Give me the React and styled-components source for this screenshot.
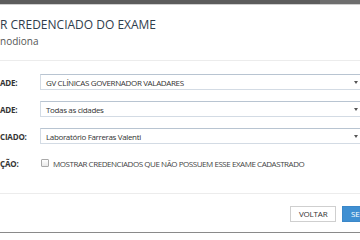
import React from 'react'
import styled, { createGlobalStyle } from 'styled-components'

const GlobalStyle = createGlobalStyle`
  html, body {
    margin: 0;
    padding: 0;
    background: #555;
    overflow: hidden;
  }
  * { box-sizing: border-box; }
`

const Screen = styled.div`
  width: 360px;
  height: 240px;
  overflow: hidden;
  display: flex;
  flex-direction: column;
  font-family: 'Open Sans', 'Noto Sans', sans-serif;
`

const TopBar = styled.div`
  height: 5px;
  flex-shrink: 0;
  display: flex;
  border-bottom: 1px solid #cfcfcf;
`

const BarPart = styled.div`
  flex: ${p => (p.grow ? 1 : 'none')};
  width: ${p => (p.grow ? 'auto' : '40px')};
  background: ${p => p.tone};
`

const Modal = styled.div`
  width: 420px;
  flex: 1;
  background: #fff;
  display: flex;
  flex-direction: column;
`

const Header = styled.div`
  height: 56px;
  padding-top: 12px;
  border-bottom: 1px solid #ececec;
`

const Title = styled.h3`
  margin: 0;
  font-size: 12px;
  line-height: 16px;
  font-weight: 400;
  color: #2f3d4c;
  white-space: nowrap;
`

const Subtitle = styled.div`
  margin-top: 1px;
  font-size: 10px;
  line-height: 14px;
  color: #555;
`

const Body = styled.div`
  padding: 13px 0 22px;
  display: flex;
  flex-direction: column;
  gap: 11px;
  border-bottom: 1px solid #ececec;
`

const Row = styled.div`
  display: flex;
  align-items: center;
  height: 16px;
`

const Label = styled.label`
  width: 40px;
  flex-shrink: 0;
  font-size: 8px;
  font-weight: 700;
  letter-spacing: -0.2px;
  color: #333;
  white-space: nowrap;
`

const Select = styled.div`
  width: 323px;
  height: 16px;
  border: 1px solid #d3dbe4;
  border-top-color: #b8c4d1;
  display: flex;
  align-items: center;
  justify-content: space-between;
  padding: 0 3px 0 5px;
  font-size: 8px;
  letter-spacing: -0.35px;
  color: #333;
  white-space: nowrap;
`

const Caret = styled.span`
  width: 0;
  height: 0;
  border-left: 2px solid transparent;
  border-right: 2px solid transparent;
  border-top: 3px solid #555;
  margin-right: 1px;
`

const Check = styled.span`
  width: 8px;
  height: 8px;
  margin-left: 1px;
  border: 1px solid #a9a9a9;
  border-radius: 1px;
  background: linear-gradient(#fff, #e9e9e9);
  flex-shrink: 0;
`

const CheckText = styled.span`
  margin-left: 4px;
  font-size: 8px;
  letter-spacing: -0.45px;
  color: #444;
  white-space: nowrap;
`

const Footer = styled.div`
  display: flex;
  gap: 6px;
  padding: 12px 0 10px 290px;
  border-bottom: 1px solid #8a8a8a;
`

const Button = styled.button`
  width: ${p => (p.primary ? 'auto' : '46px')};
  height: 16px;
  padding: 0 8px;
  font-family: inherit;
  font-size: 8px;
  letter-spacing: -0.2px;
  line-height: 14px;
  border: 1px solid ${p => (p.primary ? '#3b87c8' : '#cfcfcf')};
  background: ${p => (p.primary ? '#3f8fd2' : '#fff')};
  color: ${p => (p.primary ? '#fff' : '#333')};
  white-space: nowrap;
`

const fields = [
  { label: 'ADE:', value: 'GV CLÍNICAS GOVERNADOR VALADARES' },
  { label: 'ADE:', value: 'Todas as cidades' },
  { label: 'CIADO:', value: 'Laboratório Farreras Valenti' },
]

export default function App() {
  return (
    <Screen>
      <GlobalStyle />
      <TopBar>
        <BarPart grow tone="#5c5c5c" />
        <BarPart tone="#6e6e6e" />
      </TopBar>
      <Modal>
        <Header>
          <Title>R CREDENCIADO DO EXAME</Title>
          <Subtitle>nodiona</Subtitle>
        </Header>
        <Body>
          {fields.map((f, i) => (
            <Row key={i}>
              <Label>{f.label}</Label>
              <Select>
                <span>{f.value}</span>
                <Caret />
              </Select>
            </Row>
          ))}
          <Row>
            <Label>ÇÃO:</Label>
            <Check />
            <CheckText>MOSTRAR CREDENCIADOS QUE NÃO POSSUEM ESSE EXAME CADASTRADO</CheckText>
          </Row>
        </Body>
        <Footer>
          <Button>VOLTAR</Button>
          <Button primary>SELECIONAR</Button>
        </Footer>
      </Modal>
    </Screen>
  )
}
